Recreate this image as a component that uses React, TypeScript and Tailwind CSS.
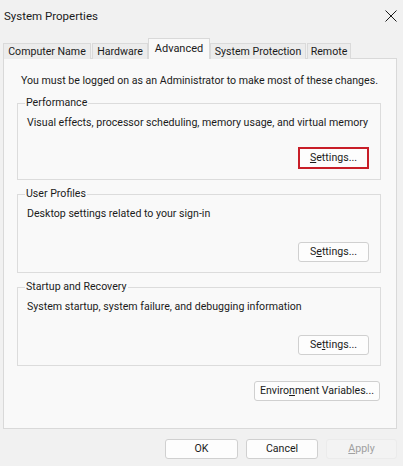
import React from "react";

const tabs = [
  { label: "Computer Name", w: "w-[88px]" },
  { label: "Hardware", w: "w-[56px]" },
  { label: "Advanced", w: "w-[62px]", active: true },
  { label: "System Protection", w: "w-[96px]" },
  { label: "Remote", w: "w-[44px]" },
];

const Btn = ({
  children,
  className = "",
}: {
  children: React.ReactNode;
  className?: string;
}) => (
  <button
    className={`h-[20px] whitespace-nowrap rounded-[3px] border border-[#d0d0d0] bg-[#fdfdfd] text-[10.6px] leading-[16px] text-[#1b1b1b] ${className}`}
  >
    {children}
  </button>
);

const GroupBox = ({
  title,
  text,
  button,
  highlight,
}: {
  title: string;
  text: string;
  button: React.ReactNode;
  highlight?: boolean;
}) => (
  <fieldset className="ml-[13px] mt-[6px] w-[364px] min-w-0 border border-[#dcdcdc] pl-[9px] pr-[11px] pb-[10px]">
    <legend className="-ml-[2px] whitespace-nowrap px-[1px] text-[10.6px] leading-[16px] text-[#1b1b1b]">
      {title}
    </legend>
    <p className="mt-[4px] whitespace-nowrap text-[10.6px] leading-[16px] text-[#1b1b1b]">{text}</p>
    <div className={`flex justify-end ${highlight ? "mt-[16px]" : "mt-[20px]"}`}>
      {highlight ? (
        <button className="h-[22px] w-[71px] whitespace-nowrap border-2 border-[#c81e28] bg-[#fdfdfd] text-[10.6px] leading-[16px] text-[#1b1b1b]">
          {button}
        </button>
      ) : (
        <Btn className="w-[71px]">{button}</Btn>
      )}
    </div>
  </fieldset>
);

export default function App() {
  return (
    <div
      className="flex h-[466px] w-[403px] flex-col overflow-hidden bg-[#f1f1f1] text-[#1b1b1b]"
      style={{ fontFamily: '"Segoe UI", Roboto, sans-serif' }}
    >
      {/* title bar */}
      <div className="flex h-[38px] shrink-0 items-start justify-between pl-[4px] pr-[6px] pt-[6px]">
        <span className="text-[11.5px] leading-[20px]">System Properties</span>
        <svg width="12" height="12" viewBox="0 0 12 12" className="mt-[4px]">
          <path d="M0.5 0.5 L11.5 11.5 M11.5 0.5 L0.5 11.5" stroke="#1b1b1b" strokeWidth="1" />
        </svg>
      </div>

      {/* tabs */}
      <div className="relative z-10 -mb-px flex shrink-0 items-end gap-[1px] pl-[3px]">
        {tabs.map((t) =>
          t.active ? (
            <div
              key={t.label}
              className={`${t.w} -ml-[1px] -mr-[1px] flex h-[21px] items-start justify-center whitespace-nowrap border border-b-0 border-[#d9d9d9] bg-[#f9f9f9] pt-[2px] text-[11px] leading-[16px]`}
            >
              {t.label}
            </div>
          ) : (
            <div
              key={t.label}
              className={`${t.w} flex h-[16px] items-center justify-center whitespace-nowrap border border-b-0 border-[#dadada] bg-[#ececec] pt-[1px] text-[10.6px] leading-[16px]`}
            >
              {t.label}
            </div>
          )
        )}
      </div>

      {/* tab panel */}
      <div className="ml-[3px] w-[394px] shrink-0 border border-[#d9d9d9] bg-[#f9f9f9] pt-[14px] pb-[27px]">
        <p className="whitespace-nowrap pl-[17px] text-[10.6px] leading-[16px]">
          You must be logged on as an Administrator to make most of these changes.
        </p>
        <GroupBox
          title="Performance"
          text="Visual effects, processor scheduling, memory usage, and virtual memory"
          button={
            <>
              <u>S</u>ettings...
            </>
          }
          highlight
        />
        <GroupBox
          title="User Profiles"
          text="Desktop settings related to your sign-in"
          button={
            <>
              S<u>e</u>ttings...
            </>
          }
        />
        <GroupBox
          title="Startup and Recovery"
          text="System startup, system failure, and debugging information"
          button={
            <>
              Se<u>t</u>tings...
            </>
          }
        />
        <div className="mt-[15px] flex justify-end pr-[16px]">
          <Btn className="w-[126px]">
            Enviro<u>n</u>ment Variables...
          </Btn>
        </div>
      </div>

      {/* bottom buttons */}
      <div className="mt-[10px] flex shrink-0 justify-end gap-[8px] pr-[6px]">
        <Btn className="w-[73px]">OK</Btn>
        <Btn className="w-[72px]">Cancel</Btn>
        <button className="h-[20px] w-[71px] rounded-[3px] border border-[#ebebeb] bg-[#f3f3f3] text-[10.6px] leading-[16px] text-[#a0a0a0]">
          <u>A</u>pply
        </button>
      </div>
    </div>
  );
}
